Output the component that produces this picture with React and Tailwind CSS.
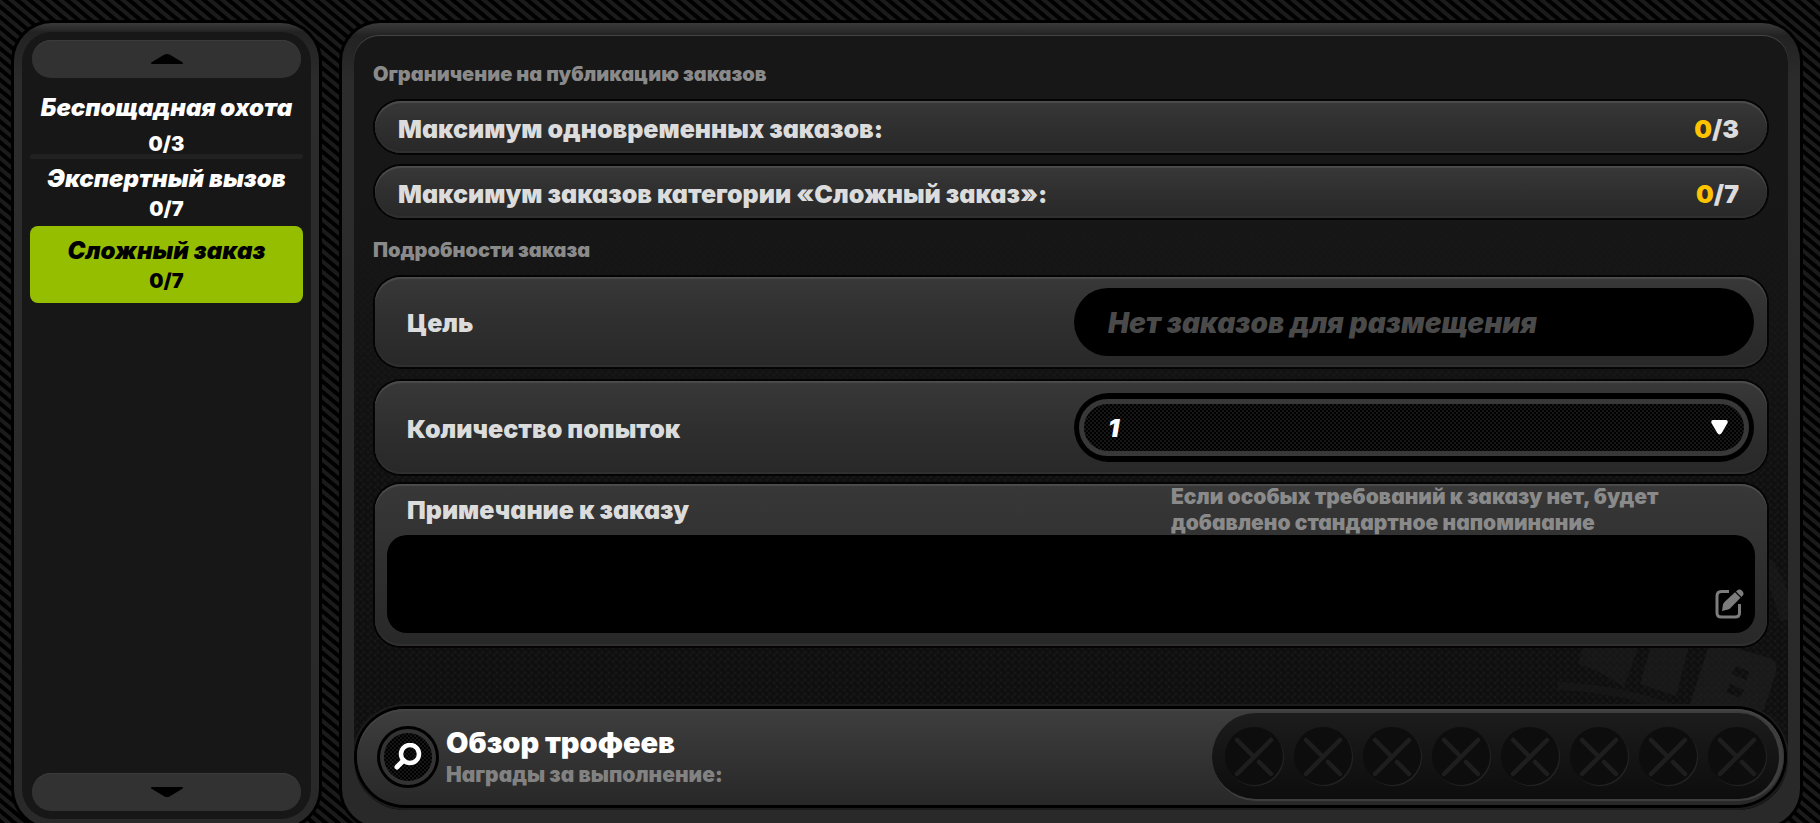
import React, { useState } from 'react';

const categories = [
  { name: 'Беспощадная охота', count: '0/3', box: 'pt-4 gap-[10px] h-[76px]' },
  { name: 'Экспертный вызов', count: '0/7', box: 'pt-[6px] gap-1 h-[67px]' },
  { name: 'Сложный заказ', count: '0/7', box: 'pt-[11px] gap-1 h-[77px]' },
];

const limits = [
  { label: 'Максимум одновременных заказов:', used: 0, max: 3 },
  { label: 'Максимум заказов категории «Сложный заказ»:', used: 0, max: 7 },
];

const rowStyle =
  'rounded-[26px] bg-linear-to-b from-[#383838] via-[#2f2f2f] to-[#282828] shadow-[0_0_0_2px_#050304,inset_0_2px_1px_#4c4c4c,inset_0_-2px_1px_#303030]';

const labelStyle = 'text-[25px] leading-[32px] font-black text-[#dcdcdc]';

const meshStyle =
  'bg-[conic-gradient(#000_25%,#161616_0_50%,#000_0_75%,#161616_0)] bg-[length:4px_4px]';

const ScrollButton = ({ label, down }) => (
  <button
    aria-label={label}
    className="mx-[10px] h-[38px] shrink-0 flex items-center justify-center rounded-full bg-[#323232] shadow-[inset_0_1px_1px_#3c3c3c]"
  >
    <svg width="34" height="12" viewBox="0 0 34 12" className={down ? 'rotate-180' : ''}>
      <path d="M1.5 11 Q0 10.200 2 9 L14.500 1.600 Q17 0.200 19.500 1.600 L32 9 Q34 10.200 32.500 11 Z" fill="#000" />
    </svg>
  </button>
);

const Sidebar = () => {
  const [active, setActive] = useState(2);

  return (
    <aside className="w-[311px] shrink-0 rounded-[41px] bg-black p-[3px]">
      <div className="h-full rounded-[38px] bg-[linear-gradient(#3a3a3a_0px,#222_9px,#2d2c2d_60px,#2a292a)] px-2 pt-[9px] pb-2">
        <div className="h-full flex flex-col rounded-[30px] bg-[#171717] py-2">
          <ScrollButton label="Вверх" />
          <nav className="flex-1 px-2">
            {categories.map((item, index) => (
              <React.Fragment key={item.name}>
                {index === 1 && <div className="h-[5px] rounded-full bg-[#212121]"></div>}
                <button
                  onClick={() => setActive(index)}
                  className={`w-full flex flex-col items-center whitespace-nowrap rounded-lg font-black ${item.box} ${
                    index === active ? 'bg-[#96be00] text-black' : 'text-white'
                  }`}
                >
                  <span className="text-[24px] leading-[28px] italic">{item.name}</span>
                  <span className="text-[20px] leading-[24px]">{item.count}</span>
                </button>
              </React.Fragment>
            ))}
          </nav>
          <ScrollButton label="Вниз" down />
        </div>
      </div>
    </aside>
  );
};

// faint stamp in the lower right corner of the panel
const Stamp = () => (
  <svg
    width="230"
    height="250"
    viewBox="0 0 230 250"
    fill="none"
    className="absolute right-0 bottom-0 opacity-60"
  >
    <path d="M205 0 Q224 30 230 60" stroke="#1c1c1c" strokeWidth="16" />
    <path d="M26 82 H82 L66 128 Q46 112 20 104 Z" fill="#1c1c1c" />
    <path d="M94 82 H132 L118 136 L82 124 Z" fill="#1e1e1e" />
    <path
      fillRule="evenodd"
      d="M150 88 Q154 80 164 84 L212 98 Q220 102 218 112 L206 150 H130 Z M178 106 L192 112 L188 120 L174 114 Z M172 124 L186 130 L182 138 L168 132 Z"
      fill="#202020"
    />
    <path d="M0 126 Q60 128 120 150" stroke="#1a1a1a" strokeWidth="8" />
  </svg>
);

const EmptySlot = () => (
  <div className="size-[58px] rounded-full bg-[#0d0d0d] shadow-[1px_1px_1px_#262626]">
    <svg viewBox="0 0 58 58" fill="none" stroke="#1e1e1e" strokeWidth="4.500" strokeLinecap="round">
      <path d="M46 13 L12 47 M12 13 L28 29 M34 35 L46 47" />
    </svg>
  </div>
);

const OrderForm = () => {
  const [attempts, setAttempts] = useState('1');
  const [note, setNote] = useState('');

  return (
    <div className="relative px-[21px]">
      <h2 className="-ml-[2px] text-[20px] leading-[24px] font-black text-[#8a8a8a]">
        Ограничение на публикацию заказов
      </h2>
      <div className="mt-[15px] flex flex-col gap-[13px]">
        {limits.map((item) => (
          <div
            key={item.label}
            className={`${rowStyle} ${labelStyle} h-[52px] pt-1 pl-[23px] pr-7 flex items-center justify-between`}
          >
            <span>{item.label}</span>
            <span>
              <span className="text-[#ffc400]">{item.used}</span>/{item.max}
            </span>
          </div>
        ))}
      </div>

      <h2 className="-ml-[2px] mt-5 text-[20px] leading-[24px] font-black text-[#8a8a8a]">
        Подробности заказа
      </h2>
      <div className={`${rowStyle} mt-[15px] h-[90px] pl-8 pr-[13px] flex items-center justify-between`}>
        <label htmlFor="target" className={`${labelStyle} pt-[2px]`}>
          Цель
        </label>
        <input
          id="target"
          placeholder="Нет заказов для размещения"
          className="w-[52%] max-w-[680px] h-[68px] rounded-full bg-black px-[34px] pt-[2px] text-[28px] font-black italic text-white placeholder:text-[#4a4a4a] outline-none"
        />
      </div>

      <div className={`${rowStyle} mt-[14px] h-[93px] pl-8 pr-[13px] flex items-center justify-between`}>
        <label htmlFor="attempts" className={`${labelStyle} pt-[2px]`}>
          Количество попыток
        </label>
        <div className="relative w-[52%] max-w-[680px] h-[69px] rounded-full bg-black px-[5px] py-[6px]">
          <select
            id="attempts"
            value={attempts}
            onChange={(e) => setAttempts(e.target.value)}
            className={`${meshStyle} appearance-none w-full h-full rounded-full border-[5px] border-[#383838] pl-6 pt-[2px] text-[25px] font-black italic text-white outline-none`}
          >
            <option>1</option>
            <option>2</option>
            <option>3</option>
          </select>
          <svg
            width="17"
            height="15"
            viewBox="0 0 17 15"
            className="absolute right-[26px] top-[27px] pointer-events-none"
          >
            <path d="M2 0 H15 Q17.500 0.500 16.500 3 L11 12.500 Q8.500 16.500 6 12.500 L0.500 3 Q-0.500 0.500 2 0 Z" fill="#fff" />
          </svg>
        </div>
      </div>

      <div className={`${rowStyle} mt-[10px] h-[162px] px-3 pb-[13px] flex flex-col`}>
        <div className="h-[51px] pl-5 flex justify-between">
          <label htmlFor="note" className={`${labelStyle} pt-[10px]`}>
            Примечание к заказу
          </label>
          <p className="w-[584px] text-[21px] leading-[26px] font-black text-[#8a8a8a]">
            Если особых требований к заказу нет, будет
            <br />
            добавлено стандартное напоминание
          </p>
        </div>
        <div className="relative flex-1">
          <textarea
            id="note"
            value={note}
            onChange={(e) => setNote(e.target.value)}
            className="block w-full h-full resize-none rounded-[20px] bg-black px-5 py-3 text-[20px] text-white outline-none"
          />
          <svg
            width="29"
            height="30"
            viewBox="0 0 29 30"
            fill="none"
            className="absolute right-[11px] bottom-[14px] pointer-events-none"
          >
            <path d="M14 2.500 H6.500 Q2 2.500 2 7 V24 Q2 28 6.500 28 H20 Q24.500 28 24.500 24 V15" stroke="#7c7c7c" strokeWidth="3" />
            <path d="M7 22 L8 15.500 Q8.500 14 9.500 13 L20 3.300 L25.500 8.800 L15.500 19 Q14.500 20 13 20.500 Z" fill="#7c7c7c" />
            <path d="M21 2.500 L23 0.800 Q25 -0.200 27.200 1.800 Q29.200 4 28.200 6 L26.400 7.900 Z" fill="#7c7c7c" />
          </svg>
        </div>
      </div>
    </div>
  );
};

const TrophyBar = () => (
  <div className="relative ml-[3px] mr-1 mt-[63px] h-24 rounded-full bg-linear-to-b from-[#3e3e3e] to-[#282828] shadow-[0_0_0_3px_#000,0_0_0_5px_#1c1c1c,inset_0_2px_1px_#444] pl-5 flex items-center">
    <button
      aria-label="Обзор трофеев"
      className="size-[62px] shrink-0 rounded-full bg-black p-[3px]"
    >
      <span className={`${meshStyle} size-full flex items-center justify-center rounded-full border-4 border-[#333]`}>
        <svg width="28" height="28" viewBox="0 0 28 28" fill="none" stroke="#fff" strokeLinecap="round">
          <circle cx="16" cy="11" r="9" strokeWidth="4.500" />
          <path d="M9.500 17.500 L3 24" strokeWidth="5" />
        </svg>
      </span>
    </button>
    <div className="ml-[7px] pt-[2px] flex-1 whitespace-nowrap">
      <div className="text-[29px] leading-[34px] font-black text-white">Обзор трофеев</div>
      <div className="text-[21px] leading-[30px] font-black text-[#828282]">Награды за выполнение:</div>
    </div>
    <div className="h-[88px] mr-px rounded-full bg-linear-to-b from-[#1c1c1c] to-[#0d0d0d] border-r-4 border-b-2 border-[#3e3e3e] px-[13px] flex items-center gap-[11px]">
      {Array.from({ length: 8 }, (_, index) => (
        <EmptySlot key={index} />
      ))}
    </div>
  </div>
);

const App = () => (
  <div className="h-screen overflow-hidden bg-black bg-[repeating-linear-gradient(40deg,#000_0px,#000_3px,#1b1b1b_4px,#1b1b1b_7px,#000_8px)] font-['Inter',sans-serif] [font-feature-settings:'cv11']">
    <div className="flex gap-[17px] pt-5 pl-[11px] pr-[17px]">
      <Sidebar />
      <main className="min-w-0 flex-1 rounded-[41px] bg-black p-[3px]">
        <div className="rounded-[38px] bg-[linear-gradient(#3a3a3a_0px,#222_13px,#2d2c2d_60px,#2a292a)] px-3 pt-[13px] pb-[17px]">
          <div className="relative overflow-hidden rounded-t-[25px] rounded-b-[50px] bg-[#171717] bg-[linear-gradient(#171717_20%,transparent_60%),radial-gradient(#0f0f0f_35%,transparent_60%),radial-gradient(#0f0f0f_35%,transparent_60%)] bg-[length:auto,7px_7px,7px_7px] bg-[position:0_0,0_0,3px_3px] pt-[26px] pb-[5px] shadow-[0_-1px_0_#444]">
            <Stamp />
            <OrderForm />
            <TrophyBar />
          </div>
        </div>
      </main>
    </div>
  </div>
);

export default App;
